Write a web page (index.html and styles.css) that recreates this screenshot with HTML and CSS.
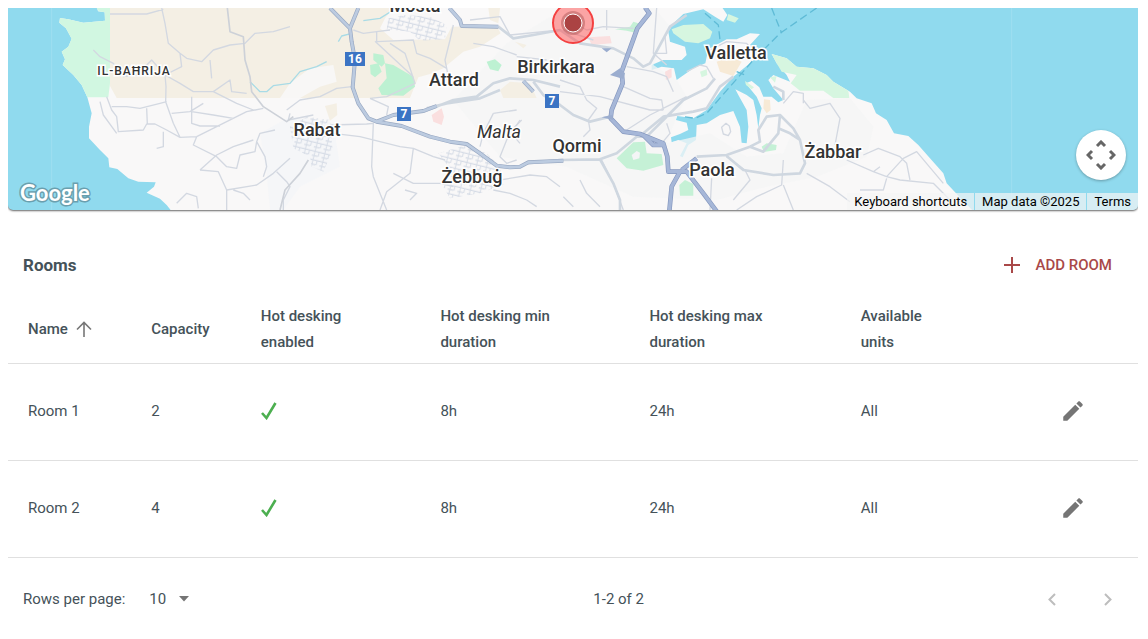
FILE: index.html
```
<!DOCTYPE html>
<html lang="en">
<head>
    <meta charset="UTF-8">
    <meta name="viewport" content="width=device-width, initial-scale=1.0">
    <title>Rooms</title>
    <link rel="stylesheet" href="styles.css">
</head>
<body>
    <section class="map">
        <svg class="map-canvas" viewBox="8 8 1130 202" preserveAspectRatio="xMidYMid slice" role="img" aria-label="Map of Malta">
            <defs>
                <pattern id="streets" width="30" height="26" patternUnits="userSpaceOnUse" patternTransform="rotate(14)">
                    <path d="M0 4H30M0 17H18M7 0V26M20 4V17" fill="none" stroke="#d6dce6" stroke-width="3"/>
                </pattern>
            </defs>
            <g transform="scale(.33333)">
                <!-- land -->
                <path fill="#f9f8f8" d="M290 20L294 34L314 37L315 62L250 68L205 58L180 54L178 68L198 85L215 116L205 140L185 155L195 178L188 195L220 225L245 255L262 292L275 340L267 380L267 415L300 450L325 475L328 502L352 507L385 535L415 545L467 547L462 560L440 578L480 596L500 615L515 634H2920L2873 585L2840 550L2830 520L2790 475L2755 435L2725 408L2682 400L2660 360L2628 340L2615 310L2570 295L2550 275L2500 245L2480 225L2440 205L2390 200L2360 175L2315 162L2330 190L2360 225L2370 245L2320 225L2305 240L2320 265L2350 300L2335 307L2315 290L2290 290L2278 262L2255 243L2237 250L2270 290L2285 325L2280 345L2275 385L2270 345L2260 300L2240 285L2206 268L2215 285L2240 330L2245 380L2240 430L2225 428L2220 380L2200 333L2160 345L2120 370L2090 375L2088 420L2065 435L2048 472L2040 468L2060 430L2035 420L2015 427L2013 412L2040 402L2065 390L2060 368L2028 360L2032 348L2080 355L2120 330L2160 275L2200 230L2262 180L2275 165L2250 135L2280 102L2250 100L2210 118L2180 118L2125 148L2116 190L2080 205L2030 240L2022 205L1985 200L1955 210L1955 195L1990 180L2045 180L2060 165L2055 140L2010 125L2005 95L2022 68L2050 42L2110 28L2145 50L2170 65L2182 45L2165 20Z"/>
                <path fill="#f4f5f6" d="M1360 300L1520 130L1700 20H1960L2010 80L1960 195L2030 240L2060 290L2030 350L2000 430L2130 400L2240 470L2350 460L2420 300L2550 295L2620 380L2600 470L2450 530L2300 560L2150 600L1900 590L1700 500L1500 470Z" opacity=".75"/>
                <path fill="#f4f5f8" d="M780 400L870 350L1000 370L1020 500L900 560L850 630H810L800 520Z" opacity=".7"/>
                <!-- fields, only in the upper tiles -->
                <path fill="#f4efe4" d="M330 24H1180L1155 55L1140 85L1180 120L1335 118L1355 80L1490 78L1502 100L1440 140L1390 155L1330 205L1290 222L1255 232L1230 294H350L330 258Z"/>
                <path fill="#f8f7f6" d="M870 250L930 205L1000 195L1010 245L960 260L900 294H840Z"/>
                <path fill="#f4efe4" d="M1500 270L1530 245L1590 250L1610 294H1510ZM1545 125L1580 135L1570 145ZM1465 24H1500L1495 70L1470 60ZM975 318L1010 310L1012 345L990 362Z"/>
                <path fill="#f7ead6" d="M2150 185L2190 170L2225 185L2200 228L2160 215ZM2292 298L2310 300L2312 330L2300 340L2290 325Z"/>
                <!-- green areas -->
                <path fill="#d1f7e1" d="M290 24L296 34L314 37L315 62L250 68L205 58L180 54L178 68L198 85L215 116L205 140L185 155L195 178L188 195L220 225L245 255L262 292H325L330 250V24Z"/>
                <path fill="#d6f6e0" d="M2015 88L2050 75L2110 72L2137 95L2130 115L2095 130L2055 125L2020 100ZM2185 42L2216 55L2205 68L2180 60ZM2315 162L2360 175L2390 200L2440 205L2480 225L2500 245L2545 272L2548 294H2500L2470 272H2400L2372 250L2390 225L2345 215L2330 190ZM2100 215L2120 208L2122 225L2105 232ZM2235 243L2262 262L2255 268L2238 255ZM2310 232L2330 228L2325 248Z"/>
                <path fill="#bdf1d2" d="M1120 160L1150 165L1155 190L1145 200L1120 180ZM1110 195L1135 190L1145 215L1125 232L1112 222ZM1155 190L1180 195L1240 230L1245 260L1210 287L1145 285L1135 265L1160 235ZM1460 185L1485 178L1505 195L1495 214L1470 208Z"/>
                <path fill="#c5f1d6" d="M1850 475L1900 427L1935 425L1940 460L1985 462L1990 495L1930 512L1880 505ZM2038 555L2055 540L2080 552L2080 587L2040 587ZM2285 440L2300 430L2330 435L2328 450L2292 456ZM1845 88L1890 80L1900 65L1915 70L1912 100L1880 92Z"/>
                <path fill="#f4f5f6" d="M1895 465L1910 453L1920 458L1918 475L1900 480Z"/>
                <path fill="#fadfdf" d="M1295 345L1325 325L1332 350L1325 375L1300 365ZM1765 112L1830 108L1835 130L1775 135ZM1995 215L2015 205L2015 232L1998 240Z"/>
                <!-- town street grids -->
                <g fill="url(#streets)">
                    <path d="M1165 55L1215 45L1290 50L1340 75L1335 118L1260 122L1230 95L1160 88Z"/>
                    <path d="M870 380L920 350L990 360L998 450L970 515L935 500L930 470L880 445Z"/>
                    <path d="M1315 460L1400 435L1460 460L1500 500L1510 555L1440 580L1350 595L1330 560L1360 520Z"/>
                </g>
                <!-- minor roads -->
                <g class="road-minor">
                    <path d="M330 42H440L490 28M485 24L495 70L505 130L540 160L560 175L605 185L640 150L690 135L735 130L765 100L820 95L870 80M540 160L545 200L495 225L540 250L580 275L640 275L710 310L760 330M280 150L300 170L340 190L370 230L410 225L455 180L495 225L498 260L497 305L520 370L540 412M630 180L635 235M640 275L690 240L695 275L740 280M320 290L335 330L350 350L355 395L430 390L440 372H465L500 390L540 412L590 410L650 380L740 335L790 325M300 305L310 345L350 400M335 320H380L420 325L480 310L500 305M440 325L442 372M575 290V370L600 378H660M575 335L640 345L700 355M515 340L570 335L610 310M590 410L580 435L650 470L680 500L710 505L720 465L765 455L770 425L780 400L825 390M600 510L650 465L700 440L760 420M600 510L655 515L680 570L770 555L820 520L870 475M770 425L795 470L800 500L790 530M680 570V630M700 570L730 580L750 600M530 610L560 580L590 590L595 625M490 395V440L470 445M830 515L860 545L870 560L850 600V630"/>
                    <path d="M860 330L900 300L960 290L1010 265L1055 260M870 340L865 360L940 345M1060 90L1090 100L1130 95L1170 90M1130 95V125L1200 122L1240 120L1250 160L1290 175L1340 205M1170 130L1215 160L1245 250L1160 290L1110 295M1125 124L1180 175L1240 230M1360 75L1350 120L1335 180L1345 230M1110 295L1165 320L1160 345M990 375L1100 372L1120 370L1115 500L1120 530L1160 630M1000 400L1080 410L1200 440L1240 445L1230 520L1160 575L1140 630M1240 445L1300 470L1335 480M1180 520L1240 550L1320 550L1360 560M1230 600L1250 580L1215 570M1480 340L1450 400L1440 440M1560 360L1520 420L1500 470L1520 490L1550 480M1550 330L1480 340M1480 570L1530 580L1580 600L1610 620M1500 540L1590 525L1640 530L1680 560"/>
                    <path d="M1550 170L1600 175L1640 180M1410 60L1500 50L1530 105L1680 90M1420 130L1480 140L1550 165M1680 240L1740 260L1760 300L1790 325L1765 360L1770 390L1750 410M1560 430L1530 395L1565 360M1695 55L1760 90L1810 80L1900 85M1690 90L1780 120M1820 30V90M1970 24L1960 160L2000 195M1960 160H2000L1995 110L2010 80M1880 200L1960 215L2000 230L2020 275M1870 260L1950 295L1985 300L1990 330M1680 275L1800 290L1950 330L1990 330M1880 390L1950 345L2000 320L2060 290M1985 430L2010 400L2000 370M2060 215L2100 195L2120 200L2140 235M2130 150L2180 125L2240 130L2270 165M2410 300L2430 325L2490 310L2520 355L2505 435M2350 310L2380 275L2410 280V310M2180 470L2235 510L2250 540L2200 600M2350 480L2345 555L2270 590L2210 630M2350 555L2380 630M2420 520L2490 560L2550 605M2590 465L2635 445L2700 470L2720 490L2730 540M2540 480L2620 515L2660 530L2700 540L2800 550L2850 600M2660 530L2710 475L2750 455L2830 550M2620 515L2640 500M2660 535L2650 570L2580 570M2135 535L2130 630M1805 480L1840 550L1870 630M1800 620L1760 580L1740 540M1690 590L1720 620"/>
                </g>
                <path d="M750 245L780 275H800L820 257L870 250L900 215L950 200L980 185M1015 125L1025 108L1055 100M1090 62L1140 55L1180 30" fill="none" stroke="#a8dbe6" stroke-width="4"/>
                <!-- secondary roads -->
                <path class="road-rural" d="M682 24L690 95L730 110L735 180L750 230L755 275L790 320L860 365L880 350M840 630L855 570L900 520L925 480"/>
                <path class="road-mid" d="M1270 335L1360 300L1430 290L1480 250L1530 235L1600 240L1680 260M1280 325L1340 310L1440 295L1500 270M1600 245L1630 285L1680 315L1720 345L1770 365L1830 350M1495 80L1540 115L1600 105L1680 90L1740 130L1840 145L1900 175L1930 200L1950 190L2010 80L2060 45M1580 490L1680 480L1800 478L1850 460L1910 410L1940 410L1990 360L2050 300L2120 265L2145 235M1930 400L1990 350L2080 335L2120 325L2160 260L2200 230M1800 478L1840 550L1860 600V634M2090 470L2180 465L2250 440L2280 425L2275 390L2300 350L2340 345L2380 385L2400 420L2415 490L2400 520L2320 525L2230 510L2180 468M2340 345L2335 400L2290 455L2250 440M2320 260L2350 275L2350 300M2335 385L2370 400L2400 420"/>
                <path class="road-minor" d="M2165 382L2178 370L2188 378L2192 395L2185 407L2170 402Z"/>
                <!-- highways -->
                <path class="road-main-edge" d="M990 24L1050 85L1055 125L1065 180L1058 262L1075 310L1105 355L1130 365L1205 378L1290 410L1350 425L1400 432L1440 460L1490 497L1530 502L1560 500L1585 487L1690 482M1050 85L1075 24M1130 365L1180 345L1270 333L1310 318M1348 24L1380 60L1385 78L1495 80M1570 243L1600 275"/>
                <path class="road-main" d="M990 24L1050 85L1055 125L1065 180L1058 262L1075 310L1105 355L1130 365L1205 378L1290 410L1350 425L1400 432L1440 460L1490 497L1530 502L1560 500L1585 487L1690 482M1050 85L1075 24M1130 365L1180 345L1270 333L1310 318M1348 24L1380 60L1385 78L1495 80M1570 243L1600 275"/>
                <path class="highway-edge" d="M1935 22L1948 40L1930 62L1912 85L1865 215L1868 250L1835 330L1832 355L1870 395L1920 402L1990 430L2002 470L2005 515L2060 515L2110 580L2150 634M2040 515L2015 560L2008 634M1930 405L1960 435L1990 435M2045 510L2090 475"/>
                <path class="highway" d="M1935 22L1948 40L1930 62L1912 85L1865 215L1868 250L1835 330L1832 355L1870 395L1920 402L1990 430L2002 470L2005 515L2060 515L2110 580L2150 634M2040 515L2015 560L2008 634M1930 405L1960 435L1990 435M2045 510L2090 475"/>
                <path fill="#9badcf" d="M1830 225L1860 205L1875 220L1870 237ZM1805 352L1835 345L1840 360ZM1805 145H1835L1820 157Z"/>
                <!-- ferry lines -->
                <path d="M2450 24L2340 100L2260 180L2120 340L2085 355L2050 350M2315 24L2345 100M2115 40L2155 75L2160 120M2210 215L2235 225" fill="none" stroke="#5fbbd6" stroke-width="4" stroke-dasharray="24 12"/>
                <path d="M155 24V630M3035 24V630" stroke="#9fdff0" stroke-width="3"/>
            </g>

            <g class="shield">
                <rect x="345" y="52" width="20" height="14"/>
                <rect x="397" y="107" width="14" height="14"/>
                <rect x="545" y="94" width="14" height="14"/>
                <text x="355" y="63">16</text>
                <text x="404" y="118">7</text>
                <text x="552" y="105">7</text>
            </g>
            <g class="place">
                <text x="415" y="12">Mosta</text>
                <text x="454" y="86">Attard</text>
                <text x="556" y="73">Birkirkara</text>
                <text x="736" y="59">Valletta</text>
                <text x="317" y="136">Rabat</text>
                <text x="577" y="152">Qormi</text>
                <text x="472" y="183">Żebbuġ</text>
                <text x="712" y="176">Paola</text>
                <text x="833" y="158">Żabbar</text>
                <text class="place-region" x="499" y="138">Malta</text>
                <text class="place-small" x="134" y="75">IL-BAĦRIJA</text>
            </g>

            <circle cx="573" cy="23" r="20" fill="#ff5252" fill-opacity=".5" stroke="#f44040" stroke-width="2"/>
            <circle cx="573" cy="23" r="12" fill="#8f3c3c" fill-opacity=".35"/>
            <circle cx="573" cy="23" r="9" fill="#ab4343" stroke="#fff" stroke-width="1"/>
            <text class="map-logo" x="20" y="201">Google</text>
        </svg>

        <button class="map-pan" type="button" aria-label="Map camera controls">
            <svg width="30" height="30" viewBox="0 0 30 30">
                <path d="M11 6l4-4 4 4M11 24l4 4 4-4M6 11l-4 4 4 4M24 11l4 4-4 4" fill="none" stroke="#666" stroke-width="3"/>
            </svg>
        </button>
        <div class="map-credits">
            <button type="button">Keyboard shortcuts</button>
            <span>Map data ©2025</span>
            <a href="#">Terms</a>
        </div>
    </section>

    <section class="rooms">
        <header class="rooms-header">
            <h2>Rooms</h2>
            <button class="add-room" type="button">
                <svg width="16" height="16" viewBox="0 0 16 16"><path d="M8 0v16M0 8h16" stroke="currentColor" stroke-width="2"/></svg>
                ADD ROOM
            </button>
        </header>

        <table class="rooms-table">
            <thead>
                <tr>
                    <th class="col-name">
                        <button class="sort" type="button">Name
                            <svg width="16" height="16" viewBox="0 0 16 16"><path d="M8 16V2M1 8.500l7-7 7 7" fill="none" stroke="#777" stroke-width="1.600"/></svg>
                        </button>
                    </th>
                    <th class="col-capacity">Capacity</th>
                    <th class="col-enabled">Hot desking<br>enabled</th>
                    <th class="col-min">Hot desking min<br>duration</th>
                    <th class="col-max">Hot desking max<br>duration</th>
                    <th class="col-units">Available<br>units</th>
                    <th></th>
                </tr>
            </thead>
            <tbody>
                <tr>
                    <td>Room 1</td>
                    <td>2</td>
                    <td><svg class="check" width="16" height="18" viewBox="0 0 16 18" role="img" aria-label="Yes"><path d="M1 11l4.500 5L14.500 1" fill="none" stroke="#4caf50" stroke-width="2.600"/></svg></td>
                    <td>8h</td>
                    <td>24h</td>
                    <td>All</td>
                    <td><button class="icon-button" type="button" aria-label="Edit Room 1"><svg width="26" height="26" viewBox="0 0 24 24"><path d="M3 17.250V21h3.750L17.810 9.940l-3.750-3.750L3 17.250zM20.710 7.040c.39-.39.39-1.020 0-1.410l-2.340-2.340c-.39-.39-1.020-.39-1.410 0l-1.830 1.830 3.750 3.750 1.830-1.830z"/></svg></button></td>
                </tr>
                <tr>
                    <td>Room 2</td>
                    <td>4</td>
                    <td><svg class="check" width="16" height="18" viewBox="0 0 16 18" role="img" aria-label="Yes"><path d="M1 11l4.500 5L14.500 1" fill="none" stroke="#4caf50" stroke-width="2.600"/></svg></td>
                    <td>8h</td>
                    <td>24h</td>
                    <td>All</td>
                    <td><button class="icon-button" type="button" aria-label="Edit Room 2"><svg width="26" height="26" viewBox="0 0 24 24"><path d="M3 17.250V21h3.750L17.810 9.940l-3.750-3.750L3 17.250zM20.710 7.040c.39-.39.39-1.020 0-1.410l-2.340-2.340c-.39-.39-1.020-.39-1.410 0l-1.830 1.830 3.750 3.750 1.830-1.830z"/></svg></button></td>
                </tr>
            </tbody>
        </table>

        <footer class="pagination">
            <div class="page-size">
                <label for="rows">Rows per page:</label>
                <span class="select">
                    <select id="rows">
                        <option>10</option>
                        <option>25</option>
                        <option>50</option>
                    </select>
                    <svg width="10" height="6" viewBox="0 0 10 6"><path d="M0 0h10L5 5.500z" fill="#757575"/></svg>
                </span>
            </div>
            <span>1-2 of 2</span>
            <div class="page-nav">
                <button type="button" disabled aria-label="Previous page"><svg width="8" height="13" viewBox="0 0 8 13"><path d="M7 1L1.500 6.500 7 12" fill="none" stroke="#bdbdbd" stroke-width="2"/></svg></button>
                <button type="button" disabled aria-label="Next page"><svg width="8" height="13" viewBox="0 0 8 13"><path d="M1 1l5.500 5.500L1 12" fill="none" stroke="#bdbdbd" stroke-width="2"/></svg></button>
            </div>
        </footer>
    </section>
</body>
</html>
```
FILE: styles.css
```
* {
    box-sizing: border-box;
}

body {
    margin: 8px 10px 8px 8px;
    font-family: Roboto, "Liberation Sans", sans-serif;
    font-size: 15px;
    line-height: 26px;
    color: #455259;
    background-color: #fff;
}

button {
    font: inherit;
    color: inherit;
    background: none;
    border: none;
    padding: 0;
    cursor: pointer;
}

svg {
    display: block;
}

/* Map */
.map {
    position: relative;
    height: 202px;
    overflow: hidden;
    background-color: #90daee;
    border-radius: 0 0 5px 5px;
    box-shadow: 0 1px 2px rgba(0,0,0,0.6);
    clip-path: inset(0 -4px -4px -4px);
}

.map-canvas {
    width: 100%;
    height: 100%;
}

.map-canvas path {
    stroke-linejoin: round;
}

.road-minor,
.road-rural,
.road-mid,
.road-main-edge,
.road-main,
.highway-edge,
.highway {
    fill: none;
}

.road-minor {
    stroke: #d3d8e1;
    stroke-width: 4;
}

.road-rural {
    stroke: #cdd1d8;
    stroke-width: 5;
}

.road-mid {
    stroke: #cfd7e0;
    stroke-width: 8;
}

.road-main-edge {
    stroke: #98a8c2;
    stroke-width: 12;
}

.road-main {
    stroke: #bccbe0;
    stroke-width: 8;
}

.highway-edge {
    stroke: #8698bf;
    stroke-width: 14;
}

.highway {
    stroke: #a6b7d8;
    stroke-width: 10;
}

.shield rect {
    fill: #3b74c4;
}

.shield text {
    font-size: 12px;
    font-weight: 700;
    fill: #fff;
    text-anchor: middle;
}

.place text {
    font-size: 18px;
    font-weight: 500;
    fill: #333;
    stroke: #fff;
    stroke-width: 3;
    paint-order: stroke;
    text-anchor: middle;
}

.place .place-region {
    font-style: italic;
    font-weight: 400;
}

.place .place-small {
    font-size: 12px;
    letter-spacing: 1px;
}

.map-logo {
    font-family: Lato, sans-serif;
    font-size: 22px;
    font-weight: 700;
    fill: #fff;
    stroke: #6a9fae;
    stroke-width: 3;
    paint-order: stroke;
}

.map-pan {
    position: absolute;
    right: 12px;
    bottom: 30px;
    display: flex;
    align-items: center;
    justify-content: center;
    width: 50px;
    height: 50px;
    background-color: #fff;
    border-radius: 50%;
    box-shadow: 0 1px 3px rgba(0,0,0,0.3);
}

.map-credits {
    position: absolute;
    right: 0;
    bottom: 0;
    display: flex;
    gap: 1px;
    font-size: 13px;
    line-height: 17px;
    color: #000;
}

.map-credits > * {
    padding: 0 7px;
    background-color: rgba(245,245,245,0.7);
}

.map-credits a {
    color: inherit;
    text-decoration: none;
}

/* Rooms */
.rooms-header {
    display: flex;
    align-items: center;
    justify-content: space-between;
    padding: 42px 26px 25px 15px;
}

.rooms-header h2 {
    margin: 0;
    font-size: 17px;
    font-weight: 700;
}

.add-room {
    display: flex;
    align-items: center;
    gap: 16px;
    font-weight: 500;
    color: #a94848;
}

.rooms-table {
    width: 100%;
    table-layout: fixed;
    border-collapse: collapse;
}

.rooms-table th,
.rooms-table td {
    padding: 0 0 0 20px;
    text-align: left;
    border-bottom: 1px solid #e0e0e0;
}

.rooms-table th {
    padding-bottom: 8px;
    font-weight: 500;
}

.rooms-table td {
    height: 97px;
    padding-bottom: 2px;
}

.col-name {
    width: 10.9%;
}

.col-capacity {
    width: 9.7%;
}

.col-enabled {
    width: 15.9%;
}

.col-min {
    width: 18.5%;
}

.col-max {
    width: 18.7%;
}

.col-units {
    width: 17.6%;
}

.sort {
    display: flex;
    align-items: center;
    gap: 8px;
}

.icon-button {
    display: block;
}

.icon-button svg {
    fill: #757575;
}

/* Pagination */
.pagination {
    display: flex;
    align-items: center;
    justify-content: space-between;
    padding: 28px 26px 0 15px;
}

.page-size {
    display: flex;
    gap: 24px;
}

.select {
    display: flex;
    align-items: center;
    gap: 13px;
}

.select select {
    appearance: none;
    padding: 0;
    font: inherit;
    color: inherit;
    background: none;
    border: none;
}

.page-nav {
    display: flex;
    justify-content: flex-end;
    gap: 48px;
}
```
